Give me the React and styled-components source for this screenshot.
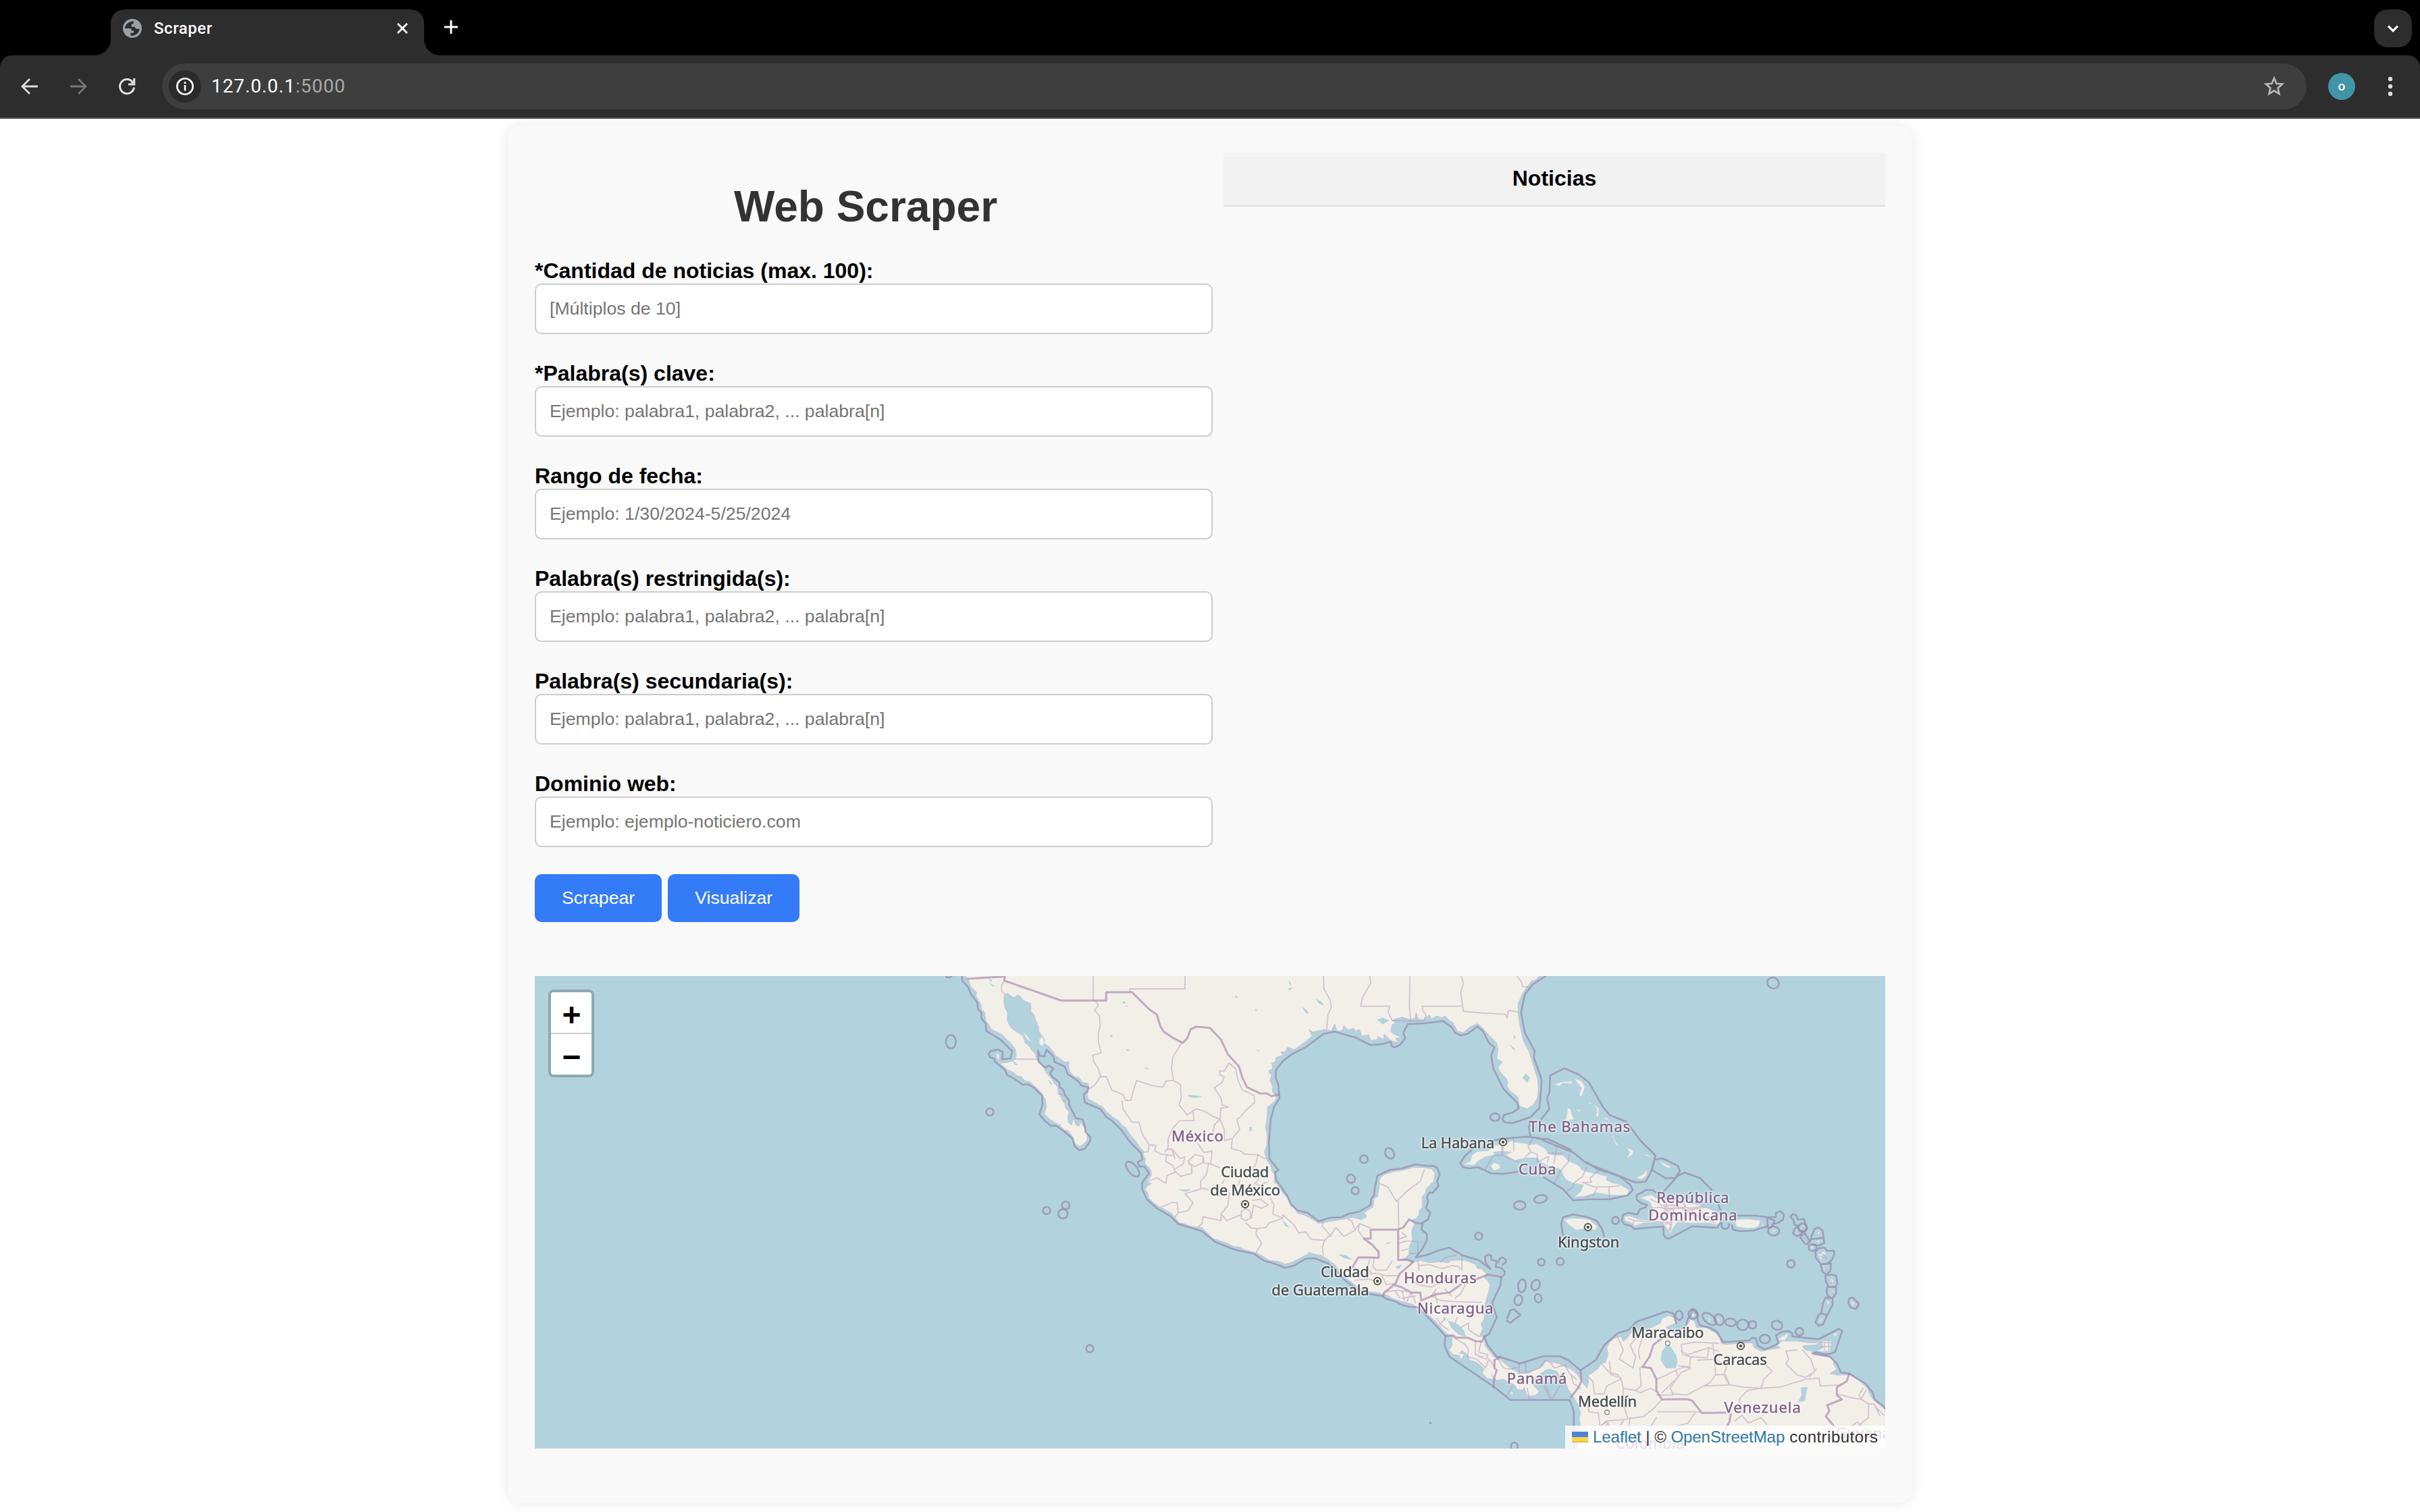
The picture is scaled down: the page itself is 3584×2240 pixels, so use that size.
import React from "react";
import styled, { createGlobalStyle } from "styled-components";

const GlobalStyle = createGlobalStyle`
  *, *::before, *::after { box-sizing: border-box; }
  html, body { margin: 0; background: #fff; }
  body { font-family: "Liberation Sans", Arial, sans-serif; overflow: hidden; }
`;

/* ---------- browser window ---------- */

const Window = styled.div`
  display: flex;
  flex-direction: column;
  width: 3584px;
  height: 2240px;
  overflow: hidden;
  background: #fff;
`;

const TabStrip = styled.div`
  display: flex;
  justify-content: space-between;
  height: 82px;
  padding: 14px 12px 0 164px;
  background: #000;
`;

const TabGroup = styled.div`
  display: flex;
  gap: 28px;
`;

const Tab = styled.div`
  position: relative;
  display: flex;
  align-items: center;
  width: 464px;
  height: 68px;
  padding: 0 22px 12px 18px;
  border-radius: 20px 20px 0 0;
  background: #2d2d2d;
  &::before,
  &::after {
    content: "";
    position: absolute;
    bottom: 0;
    width: 24px;
    height: 24px;
  }
  &::before {
    right: 100%;
    background: radial-gradient(circle at 0 0, transparent 23.5px, #2d2d2d 24.5px);
  }
  &::after {
    left: 100%;
    background: radial-gradient(circle at 100% 0, transparent 23.5px, #2d2d2d 24.5px);
  }
`;

const TabTitle = styled.span`
  flex: 1;
  padding-left: 18px;
  font: 500 24px/28px Roboto, sans-serif;
  letter-spacing: 0.55px;
  color: #fff;
`;

const NewTab = styled.div`
  display: flex;
  padding-top: 14px;
`;

const TabSearch = styled.div`
  display: flex;
  align-items: center;
  justify-content: center;
  width: 56px;
  height: 56px;
  border-radius: 20px;
  background: #2d2d2d;
`;

const ToolbarBack = styled.div`
  background: #000;
`;

const Toolbar = styled.div`
  display: flex;
  align-items: center;
  height: 94px;
  padding: 0 28px 0 28px;
  border-bottom: 2px solid #545253;
  border-radius: 18px 18px 0 0;
  background: #2d2d2d;
`;

const NavButtons = styled.div`
  display: flex;
  gap: 40px;
  width: 212px;
`;

const Omnibox = styled.div`
  display: flex;
  align-items: center;
  flex: 1;
  height: 68px;
  padding: 0 32px 0 10px;
  border-radius: 34px;
  background: #3e3e3e;
`;

const SiteInfo = styled.div`
  display: flex;
  width: 48px;
  height: 48px;
  border-radius: 50%;
  background: #2b2b2b;
`;

const Address = styled.div`
  flex: 1;
  padding-left: 15px;
  font: 400 28px/34px Roboto, sans-serif;
  letter-spacing: 0.9px;
  color: #fff;
`;

const Port = styled.span`
  color: #a9a9a9;
`;

const Avatar = styled.div`
  display: flex;
  align-items: center;
  justify-content: center;
  width: 40px;
  height: 40px;
  margin: 0 36px 0 32px;
  border-radius: 50%;
  background: #4295a6;
  font: 500 19px/40px Roboto, sans-serif;
  color: #fff;
`;

/* ---------- page ---------- */

const Page = styled.main`
  display: flex;
  justify-content: center;
  align-items: flex-start;
  flex: 1;
  padding-top: 10px;
  overflow: hidden;
`;

const Container = styled.div`
  display: flex;
  flex-direction: column;
  gap: 80px;
  width: 2080px;
  padding: 40px 40px 80px;
  border-radius: 20px;
  background: #f9f9f9;
  box-shadow: 0 0 20px rgba(0, 0, 0, 0.1);
`;

const Columns = styled.div`
  display: grid;
  grid-template-columns: 1fr 1fr;
  gap: 40px;
  align-items: start;
`;

const Title = styled.h1`
  margin: 44px 0 40px;
  font-size: 64px;
  line-height: 73px;
  text-align: center;
  color: #333;
`;

const Form = styled.form`
  display: flex;
  flex-direction: column;
  gap: 40px;
`;

const Field = styled.label`
  display: block;
  font-size: 32px;
  font-weight: bold;
  line-height: 37px;
  color: #000;
`;

const Input = styled.input`
  display: block;
  width: calc(100% + 24px);
  height: 75px;
  margin: 0;
  padding: 20px;
  border: 2px solid #ccc;
  border-radius: 10px;
  background: #fff;
  font: 26.667px "Liberation Sans", Arial, sans-serif;
  &::placeholder {
    color: #757575;
    opacity: 1;
  }
`;

const Actions = styled.div`
  display: flex;
  gap: 9px;
`;

const Button = styled.button`
  height: 71px;
  padding: 0 40px;
  border: 0;
  border-radius: 10px;
  background: #347bf8;
  font: 26.667px "Liberation Sans", Arial, sans-serif;
  color: #fff;
`;

const NewsTable = styled.table`
  width: 100%;
  border-collapse: collapse;
`;

const NewsHeading = styled.th`
  height: 79px;
  padding: 0 0 1px;
  border-bottom: 2px solid #ddd;
  background: #f2f2f2;
  font-size: 32px;
  line-height: 37px;
  color: #000;
`;

/* ---------- map ---------- */

const MapFrame = styled.section`
  position: relative;
  width: 2000px;
  height: 700px;
  overflow: hidden;
  background: #b2d2dd;
`;

const MapDrawing = styled.svg`
  display: block;
  width: 2000px;
  height: 700px;
`;

const Label = styled.text`
  font: 22px "Noto Sans", "Open Sans", sans-serif;
  stroke-width: 0.5px;
  filter: drop-shadow(0 0 1.5px #fff) drop-shadow(0 0 1.5px rgba(255, 255, 255, 0.9));
`;

const ZoomControl = styled.div`
  position: absolute;
  top: 20px;
  left: 20px;
  width: 68px;
  border: 4px solid rgba(0, 0, 0, 0.2);
  border-radius: 8px;
  background-clip: padding-box;
`;

const ZoomButton = styled.div`
  height: ${(p) => (p.$first ? 62 : 60)}px;
  padding-top: 4px;
  border-bottom: ${(p) => (p.$first ? "2px solid #ccc" : "0")};
  border-radius: ${(p) => (p.$first ? "4px 4px 0 0" : "0 0 4px 4px")};
  background: #fff;
  font: bold 48px/56px "Liberation Sans", Arial, sans-serif;
  text-align: center;
  color: #000;
  text-indent: 1px;
  & > span {
    display: block;
    padding-top: 2px;
    line-height: 56px;
  }
`;

const Attribution = styled.div`
  position: absolute;
  right: 0;
  bottom: 0;
  display: flex;
  align-items: center;
  width: 474px;
  height: 34px;
  padding: 0 10px;
  background: rgba(255, 255, 255, 0.8);
  font-size: 24px;
  line-height: 34px;
  letter-spacing: -0.05px;
  white-space: pre;
  color: #333;
`;

const Credit = styled.span`
  letter-spacing: 0.48px;
`;

const Link = styled.a`
  color: #2f78a8;
`;

const Flag = styled.span`
  width: 24px;
  height: 16px;
  margin-right: 7px;
  background: linear-gradient(#5080dc 50%, #f8d648 50% 88%, #ddc040 88%);
`;

// Map sheets: [x offset, y offset, x units per pixel, y units per pixel]
const sheets = {
  a: [608, -6, 3, 3],
  b: [1008, -6, 3, 3],
  c: [1408, -6, 2.613, 3],
  d: [1008, 334, 3, 3],
  e: [1408, 334, 2.45, 3],
  f: [1608, 294, 3, 3],
};

const place = (sheet, x, y) => {
  const [ox, oy, sx, sy] = sheets[sheet];
  return [+(ox + x / sx).toFixed(1), +(oy + y / sy).toFixed(1)];
};

// Lines are separated by ";", a lone letter switches to another sheet.
const trace = (source, close = false) => {
  let sheet = "a";
  return source
    .split(";")
    .map((line) => {
      const pts = [];
      line.trim().split(/\s+/).forEach((t) => {
        if (sheets[t]) sheet = t;
        else if (t) pts.push(place(sheet, ...t.split(",").map(Number)).join(" "));
      });
      return "M" + pts.join("L") + (close ? "Z" : "");
    })
    .join("");
};

const mainland = `a 85,0 90,18 105,38 112,62 128,80 140,90 136,104 148,128 158,140 160,165 176,180 180,215 196,240 204,254
 225,264 255,280 272,300 288,312 312,345 315,375 305,392 275,402 240,405 262,420 275,434 300,445 322,462 340,466 352,482 375,488 400,510
 430,540 445,570 450,600 440,630 455,645 462,658 485,668 510,680 528,702 545,706 565,730 575,760 595,775 615,765 630,745 630,715 615,690
 600,665 595,685 580,680 570,650 560,682 545,665 545,640 550,620 535,605 530,585 515,560 500,530 500,512 480,490 465,465 450,452 440,430 425,410
 405,390 400,365 385,350 375,332 355,315 345,285 325,270 310,262 290,245 275,215 276,180 265,160 260,130 262,100 275,95 290,104 300,112 310,112
 325,102 335,110 345,125 365,135 380,140 380,175 395,190 400,210 415,245 415,262 428,280 440,300 440,318 460,330 480,355 490,372 510,385 530,400
 550,400 548,425 555,445 575,465 595,470 610,490 635,495 640,520 630,545 635,565 665,580 680,590 700,600 720,625 745,645 770,660 785,682 800,690
 820,720 850,755 860,775 880,795 880,815 890,830 885,850 905,870 915,885 915,905 895,930 915,940 895,955 888,965 900,985 905,1005 920,1020 945,1040
 985,1062 1005,1072 1020,1090 1040,1115 1060,1118 1090,1130 1140,1136 1160,1155 1190,1185
 d 20,175 50,184 80,200 105,202 130,215 180,228 215,245 240,262 280,266 310,278 340,270 370,255 400,238 430,232 470,240 500,258 530,280 560,320
 600,355 640,385 680,400 720,405 760,415 790,432 830,445 870,455 900,470 930,495 960,515 990,545 1010,570 1035,592 1055,600 1050,620 1052,640
 1038,660 1055,680 1085,685 1088,703 1100,690 1105,678 1085,675 1095,662 1120,680 1130,705 1160,715 1185,735 1195,745 1185,760 1205,785 1240,792
 1225,770 1250,795 1280,790 1300,800 1330,815 1340,835 1365,838 1372,825 1385,865
 e 150,865 180,862 195,845 175,818 165,800 190,775 205,760 230,745 260,755 275,790 290,800 300,835 315,860 335,900 345,940 340,965 345,1000
 335,1030 330,1110 1460,1110 1450,925 1430,905 1410,885 1395,860 1385,830 1360,800 1340,785 1320,770 1280,772 1250,765 1275,745 1262,720 1265,705
 1245,690 1215,685 1190,680 1185,665 1160,660 1150,642 1200,636 1210,628 1170,628 1130,620 1075,620 1058,638 1070,652 1040,656 1000,665 975,650
 968,628 930,630 870,635 855,630 850,605 835,585 800,560 765,560 760,535 745,522 735,545 715,562 700,590 690,600 680,580 655,560 690,540 688,515
 665,508 640,520 635,540 610,555 580,575 530,580 515,605 500,622 492,600 480,602 465,610 450,625 440,650 445,680 435,715 420,720 410,740 390,760
 370,775 375,800 368,830 350,800 335,770 310,745 290,735 265,720 240,712 220,708 205,735 180,745 155,765 120,760 95,745 70,720 55,705 30,690
 15,665 0,645
 d 1195,620 1190,600 1172,600 1188,565 1180,545 1195,520 1195,470 1205,430 1215,400 1220,370 1210,350 1195,340 1205,320 1180,300 1165,298 1155,280
 1145,275 1110,262 1085,260 1050,262 1035,272 1000,268 950,272 910,262 870,272 855,262 820,262 845,250 860,235 862,200 875,170 872,130 885,100
 870,85 890,75 905,60 905,40
 b 920,1045 918,1000 935,980 935,965 950,950 970,930 975,895 960,875 930,870 880,868 840,880 790,888 750,900 728,920 728,950 720,1000 705,1005
 700,1045 660,1070 672,1085 645,1100 610,1090 590,1096 560,1100 500,1110 460,1118 440,1105 400,1082 365,1072 350,1050 335,1040 320,1005 290,970
 275,945 262,935 262,900 250,885 245,860 225,830 218,800 228,770 230,720 222,690 228,660 232,600 262,575 272,560 252,530 255,510 242,480 250,460
 235,440 255,430 250,405 265,400 270,380 300,370 290,355 312,355 320,335 350,345 400,310 430,285 415,255 435,268 450,262 490,255 515,262 530,230
 540,262 565,260 570,238 590,258 612,250 625,262 640,255 650,285 680,278 690,305 720,300 720,285 745,300 750,275 780,305 815,315 800,295 825,290
 800,280 778,265 785,235 800,225 785,215 800,208 830,200 860,210 885,210 892,180 902,210 925,212 950,190 960,208 985,195 1005,205 1020,195 1040,215
 1055,225 1075,262 1100,270 1130,245 1150,235 1165,230 1185,245 1205,270 1225,290 1250,315 1255,345 1250,385 1275,400 1255,425 1270,450 1290,470
 1300,490 1295,505 1310,530 1345,555 1350,595 1385,608 1412,590 1430,560 1435,520 1432,480 1420,440 1405,390 1392,350 1370,310 1360,270 1350,220
 1345,180 1345,140 1365,95 1385,65 1405,40 1425,35 1450,0`;

const islands = `b 1135,840 1140,815 1165,798 1215,795 1230,775 1280,765 1320,750 c 110,757 150,762 175,768 200,765 230,785 245,810 270,815 300,815
 320,840 360,860 372,880 400,890 440,900 470,910 465,925 490,938 520,945 555,970 545,992 480,990 430,980 385,995 345,1000 370,975 380,945 340,938
 310,920 290,875 250,865 215,845 200,825 150,825 110,838 80,812 105,800 60,795 30,800 b 1240,812 1200,820 1165,840 1150,858 1105,855;
 b 1225,865 1235,848 1262,855 1265,872 1240,882; a 418,300 430,288 440,312 430,330 418,318; a 345,268 365,285 380,310 365,300;
 a 228,360 240,370 238,388 230,382;
 f 88,104 115,96 140,92 165,110 220,115 300,125 360,140 420,165 448,190 445,215 425,222 395,215 320,215 250,212 232,240 222,262 208,240 190,215 150,212
 100,215 62,228 45,212 20,205 18,188 40,185 80,200 130,205 148,160 132,122 108,110;
 f 510,202 560,198 620,205 615,225 600,236 560,238 515,230; c 305,1100 345,1095 400,1100 432,1130 425,1147 390,1140 350,1145 320,1120;
 c 310,660 315,640 318,605 328,610 340,655; c 270,498 300,488 335,486 332,496 300,492 285,507; c 345,475 370,485 384,510 372,552 364,548 372,515;
 c 355,612 370,614 362,620; c 400,578 412,584 405,586; c 420,590 438,605 436,645 430,640 432,608; c 455,645 470,650 480,660 465,655;
 c 490,720 498,745 516,775 505,765 492,735; c 545,780 572,795 568,812 548,826 560,800; c 615,810 640,818 625,818; c 583,915 610,900 625,880 622,905 605,920;
 c 675,842 715,865 712,872 690,860; e 1220,620 1255,620 1250,665 1205,665 1225,650; f 945,712 968,700 955,716; f 698,735 740,708 745,715 730,735;
 f 880,355 905,342 912,352 895,360 895,378 885,372; f 926,452 945,470 942,488 932,475; f 904,405 914,412 910,428; f 934,512 942,520 936,532;
 f 918,560 928,566 920,578; f 884,648 896,640 888,656; f 1025,562 1040,575 1032,582; f 876,252 886,262 880,268; f 874,292 884,298 878,304; f 848,318 858,326 850,330;
 d 1310,845 1322,850 1318,860; f 628,222 640,226 630,230; f 672,248 690,250 680,254; f 312,612 330,626 322,632; f 388,635 400,648 394,650; f 430,638 440,650 434,654`;

const lakes = `e 655,643 668,640 690,680 697,710 690,740 655,740 637,705 640,670; d 1035,530 1075,545 1105,575 1112,600 1080,590 1050,562; d 1012,515 1025,520 1020,530;
 b 1365,470 1380,452 1398,470 1385,490; b 720,212 745,204 770,215 745,232; b 328,40 338,60 330,52; b 325,74 342,72 330,80; b 450,122 470,132 482,148 462,140;
 b 388,158 408,172 412,186 400,180; b 90,108 98,112 92,115; b 178,165 186,170 180,172; b 152,690 160,690 160,706 154,706; b 1325,285 1332,285 1330,298;
 b 1310,325 1332,345 1322,342; e 1145,828 1168,825 1158,885 1135,892 1148,860; d 800,290 828,282 815,300; d 300,85 328,115 310,108; d 548,235 580,240 605,258 570,250;
 d 415,225 440,235 410,238; d 760,185 778,180 765,188; a 1078,548 1100,548 1138,554 1110,558 1085,555; a 1040,968 1090,968 1070,976; a 195,32 208,36 202,42;
 a 200,52 218,62 210,62; a 788,132 802,134 794,140; a 800,150 812,154; a 735,280 744,286 738,290; a 804,342 816,348 810,350; a 885,425 904,428 895,430;
 a 1290,108 1298,112; a 460,480 475,498 468,498; a 300,395 322,412 308,412; a 440,640 478,662 460,655; e 215,750 235,745 255,755 245,765 220,765;
 b 630,1080 665,1075 672,1090 645,1102; b 1255,395 1272,405 1258,415; a 1385,348 1394,352`;

const waters = `a 72,0 76,40 100,65 115,100 142,135 145,165 160,180 160,205 180,230 182,262 220,285 250,305 280,335 297,350 290,385 252,388 255,355 235,345
 202,350 192,365 200,380 218,385 220,398 265,435 275,458 300,470 345,502 365,498 395,515 430,550 432,590 418,632 440,660 470,685 490,682 530,710 565,740
 575,775 595,792 620,785 645,750 645,735 622,710 622,690 610,655 580,650 568,625 550,590 550,570 530,545 525,525 508,510 505,490 475,465 465,450 480,430
 460,415 445,425 415,400 412,355;
 a 412,350 420,372 440,375 450,345 480,375 485,400 530,420 545,455 590,485 605,505 635,512 630,530 615,545 620,580 655,595 690,610 715,645 740,660 780,700
 820,755 870,805 875,835 855,845 862,865 885,865 905,895 875,935 875,965 895,1010 940,1050 1000,1085 1035,1120 1085,1135 1140,1152 1200,1200
 d 30,192 80,212 105,218 170,232 220,265 260,275 310,295 350,285 400,255 440,252 500,275 530,300 570,345 600,370 650,400 690,412 740,420 760,433 800,445
 830,460 860,468 900,470 960,530 1022,598 1018,640 1040,690 1240,825 1310,882 1480,882 e 305,882 320,930 322,1110;
 e 345,750 400,705 430,640 480,585 520,570 f 70,655 205,608 235,618 240,640 248,660;
 f 290,670 300,640 310,628 320,600 345,622 342,645 352,670 400,682 430,700 455,745 570,738 588,725 602,730 610,760 640,778 680,762 702,750 690,715 715,700
 745,695 762,705 765,720 880,732 970,686 985,695 960,770 e 1268,670 1240,680 1200,670 1185,675 1250,690 1275,720 1290,760 1320,765
 1380,810 1405,850 1412,880 1440,905 1455,925;
 e 345,750 300,705 270,688 210,688 125,720 65,695 d 1250,690 1210,640 1195,600 1215,590 1250,515 1235,470 1230,450 1265,375 1270,335 1285,325 1285,310 1270,295
 1245,290 1250,265 1225,258 1225,240 1212,236 1198,245 1200,270 1222,300 1170,260 1100,240 1040,205 990,218 940,238 890,248 920,210 940,170 940,145 915,125
 920,100 b 920,1115 945,1100 955,1070 935,1050 945,1020 940,1000 950,980 965,982 992,950 985,930 997,900 985,870 965,860 950,863 890,855 830,872 775,880 720,905
 708,960 706,990 692,1010 690,1035 640,1065 590,1075 560,1090 510,1092 458,1108 410,1070 365,1060 335,1030 320,995 270,925 265,890 280,880 240,830 238,760 245,660
 260,600 285,560 280,500 268,470 270,435 300,395 340,365 400,335 480,275 530,265 590,283 620,290 690,325 740,320 780,310 782,328 795,335 820,325 843,295 835,270
 855,232 930,228 1010,218 1050,245 1065,270 1090,282 1120,275 1165,242 1190,265 1215,315 1240,335 1225,370 1235,430 1280,520 1340,580 1348,605 1320,625 1282,635
 1275,655 1285,668 1320,672 1400,645 1440,605 1450,480 1415,380 1418,350 1375,270 1358,180 1375,100 1410,55 1480,10;
 c 215,655 247,610 238,560 248,535 250,460 305,428 360,455 400,490 455,600 480,635 545,665 600,750 658,815 640,890 620,932 580,935 530,912 390,850;
 c 175,660 168,690 174,732; b 1230,750 c 60,742 160,732 205,738 270,770 340,802 390,850 520,910 560,945 570,970 550,993 480,1010 400,1010 340,1015 300,965 225,912;
 b 1140,790 1110,815 1088,850 1100,868 1130,873 1165,867 1190,878 1225,895 1280,897 1345,887; c 200,740 240,742 330,790; c 390,845 440,880 470,890;
 c 658,833 685,828 745,862 752,885 735,915 697,917 645,880 658,815; c 690,975 745,905 770,892 830,915 875,968; f 435,135 444,158;
 f 444,212 430,237 320,230 215,285 200,282 192,268 190,232 105,238 62,242 45,228 18,222 5,205 12,178 35,170 75,178 85,155 112,145 118,135 92,128 72,112 72,90
 95,80 115,68 145,70 158,80; f 520,183 600,183 650,190 655,228 590,250 530,252 500,245 495,225;
 f 650,190 690,190 690,172 710,163 726,178 722,200 700,215 680,220 670,235 645,235; f 660,195 685,205 672,230; f 448,215 450,235 465,243 480,235 482,220;
 c 300,1170 293,1120 300,1090 340,1078 390,1088 430,1105 450,1140 460,1175;
 d 1258,270 1262,255 1275,248 1290,258 1290,272 1276,280; d 1296,520 1310,485 1325,478 1355,505 1335,520 1310,540 1295,530;
 f 755,188 765,176 780,180 788,200 815,198 820,215 828,238 815,256 798,250 785,228 772,222 770,205 755,188; f 790,228 775,240 766,262 785,275 805,262 808,248;
 f 805,270 798,280 820,308 832,310 838,292 820,262 806,270; f 842,300 850,270 862,242 880,235 898,250 905,305 880,316 850,312; f 846,288 895,282;
 f 866,345 880,328 905,325 920,340 948,338 950,355 938,380 915,398 890,398 868,370 866,345; f 888,398 935,395 932,430 915,445 897,432 888,398;
 f 910,450 935,445 958,450 964,485 955,498 925,500 912,475 910,450; f 918,500 958,500 958,530 940,550 920,540 916,518 918,500;
 f 910,548 942,550 942,580 918,625 900,665 882,673 866,658 878,628 892,615 900,570 910,548; f 890,615 915,625; f 1015,552 1030,546 1060,575 1045,598 1022,590 1012,572 1015,552`;

const countries = `a 100,30 265,20 262,38 515,127 715,127 715,90 830,90 865,125 905,165 940,190 955,240 970,265 1010,292 1055,315 1075,295 1090,255 1115,243 1175,248
 1225,300 1255,365 1305,420 1320,470 1340,512 1400,540 1430,540 1450,552 1480,545;
 d 812,260 812,125 690,125 690,165 660,165 700,195 725,225 725,250 635,248 610,290; d 812,125 835,115 860,80 890,95 915,98; d 812,260 850,258 880,268 820,320
 800,365 750,405 745,420; d 790,370 830,382 870,405 910,405 915,440; d 915,440 980,412 1040,405 1090,370; d 1160,345 1185,335 1210,325 1270,335;
 d 1022,598 1055,595 1070,605 1120,605 1160,622 1185,622 1195,600; d 1265,690 1240,705 1240,740 1250,750 1240,780 1235,825;
 e 660,590 610,635 595,690 570,735 600,740 620,790 620,840 640,880 730,878 750,885 785,940 870,938; e 890,945 885,980 870,1010;
 e 1320,765 1310,800 1275,825 1275,860 1293,880 1240,905 1248,930 1235,955 1265,1000; e 345,750 348,800 335,830 310,870`;

const states = `a 262,38 250,60 250,85 262,95; a 657,18 657,127; a 820,88 820,75 1065,75 1065,10; a 310,387 400,388;
 a 668,130 680,150 662,170 685,195 688,240 680,270 680,310 692,360 655,370 660,400 680,430 690,465 665,500 640,520;
 a 690,465 715,465 740,525 790,545 800,570 825,570 835,530 850,482 920,505 965,512 980,485 1015,482 1045,500 1048,560 1038,590 1075,635 1115,608 1150,618 1185,640 1222,655;
 a 1050,315 1010,380 1005,430 1015,482; a 1260,405 1240,440 1218,440 1220,458 1238,465 1232,488 1195,515 1225,560 1230,590 1258,600 1225,605 1220,650;
 a 1260,405 1290,430 1300,480 1320,525 1345,535 1372,550 1375,580 1335,615 1310,645 1295,655 1308,700 1275,740 1240,750; a 1220,655 1240,700 1240,750;
 a 1275,745 1270,785 1310,795 1330,810 1390,812 1420,830; a 1100,615 1105,660 1040,662 1010,695 990,740 990,780 975,800; a 1220,655 1195,680 1190,710;
 a 785,575 790,610 830,668 860,668 875,720 905,768 900,800 885,800; a 905,768 935,770 930,795 960,810 1005,815;
 a 985,790 1005,785 1020,830 1010,790 1045,830 1065,820 1055,855 1020,875 1020,890 985,905 980,940 940,915 900,930; a 985,810 978,840 1010,860 1020,885;
 a 1020,885 1045,908 1095,895 1095,865 1080,840 1110,812 1145,820 1145,845 1110,865 1080,850; a 1145,820 1150,850 1180,850 1185,795 1150,803 1120,760;
 a 1170,850 1220,870; a 1170,850 1160,900 1135,930 1135,965 1065,985 1100,1025 1080,1060 1035,1070 1020,1090; a 1135,960 1170,968; a 960,1045 1005,1025 1030,1025 1035,1070;
 a 1390,812 1380,850 1370,870; a 1262,980 1255,1040 1225,1075 1225,1105 1145,1088 1140,1120 1125,1130; a 1225,1075 1250,1105 1310,1080;
 a 1315,1065 1335,1050 1355,1065 1355,1095 1335,1105 1315,1095 1315,1065; a 1365,1015 1400,1010 1435,1035 1405,1050 1370,1035 1360,1095;
 a 1240,925 1230,940; a 1310,925 1300,950; a 1395,920 1375,940 1400,950; a 1430,935 1410,940;
 b 480,10 482,75 510,125 515,155 500,190 495,250; b 685,10 690,50 655,110 645,152 775,152 768,180 785,215 860,218 930,216; b 865,10 862,150 868,215;
 b 1090,10 1102,50 1090,90 1102,175 1200,183 1290,188 1295,205 1303,170 1345,178; b 1095,152 920,152 920,170 935,190 928,212; b 1340,18 1360,45 1365,65 1390,68;
 b 730,940 765,955 805,1020 850,975 910,930 928,880; b 812,1020 815,1145; b 245,1005 260,1035 255,1075 d 300,75; d 135,95 160,118 185,120 180,145 205,185 180,230;
 d 185,120 225,115 240,95 300,75 300,60 350,105 370,140 400,135 425,168 485,172 510,150 475,110 478,92; d 485,172 475,205 480,238;
 d 510,155 535,115 570,155 620,128 605,85 590,80; d 620,128 640,98 690,118; d 640,98 635,130 660,165;
 d 820,185 845,175 900,178 900,230 865,232; d 830,140 850,155 820,165; d 825,220 855,210; d 900,265 905,305; d 905,285 950,280 985,292 1010,298 1050,285 1080,290 1095,305 1095,240;
 d 1000,270 1020,250 1070,238; d 685,260 675,295 695,320; d 705,250 700,290 715,305 760,305 785,265; d 610,290 660,320 720,320 760,330 810,330;
 d 620,350 680,345 720,355; d 740,330 760,370 800,365; d 760,400 810,395 850,400; d 800,400 820,430; d 830,400 840,440; d 850,445 870,405; d 870,405 890,450; d 830,430 890,420;
 d 850,330 900,370 960,380; d 960,380 1000,360 1040,340; d 980,390 960,420 1000,440 1060,445; d 1110,370 1090,410 1065,430; d 1020,390 1050,420; d 975,405 985,450;
 d 1065,445 1180,448; d 985,520 1000,545 1015,525; d 1000,545 1020,560 1035,570; d 1090,560 1125,540 1125,570 1170,600; d 1075,515 1065,540; d 1060,605 1110,635 1125,660 1120,690;
 d 1155,625 1155,680 1185,690; d 1180,625 1170,670 1210,680 1205,700 1170,690; d 1120,690 1160,700 1200,740; d 1200,740 1215,700 1240,735; d 1255,700 1280,740 1310,745 1345,735;
 d 1350,720 1350,765; d 1378,715 1378,760; d 1345,765 1400,755 1440,740 1465,705 1500,720; d 1385,830 1395,880; d 1320,820 1290,870; d 1460,820 1485,875;
 e 215,810 240,880 275,810; e 290,730 305,765 330,790; e 310,770 320,810 345,830; e 230,710 250,740 290,725;
 e 420,720 450,760 480,770 490,790 440,820 430,855 395,855 390,800 370,775; e 450,710 455,770 480,780; e 480,605 500,660 485,700 535,740 545,690 525,640 550,600 540,585;
 e 490,780 500,830 545,840 565,820 560,740 570,735; e 575,585 555,660 560,700; e 545,840 560,850 600,830 620,845; e 500,830 500,900 515,960; e 640,880 610,920 575,955 550,960 495,970 440,975 415,1000;
 e 370,890 375,935 410,940 415,1000; e 625,935 780,935; e 620,960 600,1000 620,1030; e 760,940 735,985 690,1000; e 415,1000 440,980 470,1030 500,975; e 525,960 520,1000; e 445,985 425,1010;
 e 620,790 650,775 690,750 720,735 745,740; e 690,750 700,780 640,850; e 710,635 760,625 845,630; e 710,635 715,680 745,690 740,735 700,730; e 710,665 735,680 810,650 845,665;
 e 810,650 805,695 745,690; e 825,630 835,770 865,770 885,815; e 835,770 815,805 730,860 680,855 670,830 710,760 740,745; e 835,700 770,705; e 620,860 680,860; e 790,820 885,815 935,825 1000,830 1070,825 1160,790 1210,785;
 e 865,770 875,735 835,700; e 870,770 885,810; e 1000,830 1010,790 1040,755 1020,730; e 1000,830 950,840 920,880 935,940; e 1090,665 1100,700 1090,720 1130,770 1160,782 1195,755 1180,700 1150,660;
 e 1090,665 1130,660; e 1210,785 1215,820 1290,815; e 1175,780 1200,745; e 905,975 930,950 955,985 1000,960 1020,990; e 1365,875 1380,840; e 1275,855 1320,870 1365,880 1390,900 1390,960 1350,1000;
 e 1390,900 1410,900 1430,950; e 1365,880 1355,860 1370,830; e 1410,905 1445,950; e 1300,1020 1350,980 1400,1030;
 b 1280,765 1275,815 1235,815 1200,875; b 1275,815 1345,845; c 62,765 65,815; c 108,735 110,795; c 182,740 165,775 175,800 155,820; c 175,800 200,810 200,845 245,820 240,845;
 c 240,805 300,805; c 275,780 265,850; c 325,810 320,845 300,870 265,940; c 390,870 375,910 340,940 340,955 315,975; c 435,885 405,915 410,935 375,935; c 375,935 420,955 475,955 520,950;
 c 430,960 420,990 385,1000; c 478,955 480,1005; c 640,1010 690,1040 730,1035 780,1060 850,1045; c 660,1000 700,1020 700,1060 730,1090; c 690,1050 760,1050 800,1080 870,1090;
 c 660,1070 700,1120 730,1100 770,1110; c 730,1040 720,1100 715,1150; c 800,1060 820,1110; c 840,1070 850,1110;
 f 135,150 180,145 210,160 260,145 310,150 370,142; f 195,135 205,155 195,165; f 270,120 290,140 275,150; f 35,195 60,205 55,220; f 60,205 110,208 190,212; f 205,212 225,225 215,245; f 228,215 222,250;
 f 395,205 420,215; f 905,745 905,780; f 925,740 925,780; f 890,745 940,748; f 895,765 935,765; f 885,350 905,358 915,375; f 885,362 900,370; f 930,455 940,485; f 908,408 914,428; f 932,515 942,530; f 815,280 825,292;
 a 500,540 520,545; a 520,570 530,575`;

// [sheet, x, y, rx, ry, rotation]
const rings = [
  ["a", 15, 0, 20, 24, 0], ["a", 25, 310, 22, 30, 0], ["a", 198, 622, 16, 16, 0], ["a", 450, 1060, 16, 16, 0],
  ["a", 535, 1037, 17, 17, 0], ["a", 523, 1075, 21, 21, 0], ["a", 832, 876, 40, 20, 50],
  ["b", 1242, 645, 21, 17, 0], ["b", 774, 806, 19, 25, -30], ["b", 660, 832, 17, 17, 0], ["b", 602, 919, 18, 19, -30],
  ["b", 621, 972, 16, 16, 0], ["b", 1352, 1037, 26, 19, 0], ["b", 1445, 1009, 29, 17, -12], ["b", 1170, 1174, 16, 16, 0],
  ["d", 1362, 375, 17, 29, 6], ["d", 1423, 371, 18, 24, 25], ["d", 1346, 438, 18, 23, 10], ["d", 1434, 430, 15, 19, -15],
  ["d", 1448, 269, 15, 15, 0], ["d", 1532, 267, 16, 16, 0], ["d", 1328, 1088, 15, 17, 0], ["d", -558, 654, 16, 16, 0],
  ["c", 1113, 49, 23, 24, 30], ["c", 503, 1104, 13, 16, 0],
  ["f", 680, 251, 25, 20, 0], ["f", 757, 397, 17, 17, 0], ["f", 853, 325, 17, 15, 0], ["f", 809, 237, 19, 19, 0],
  ["f", 260, 626, 16, 20, 0], ["f", 322, 620, 20, 22, 0], ["f", 395, 642, 20, 36, -52], ["f", 438, 645, 20, 25, -25],
  ["f", 489, 657, 24, 17, 10], ["f", 543, 668, 25, 24, 0], ["f", 586, 668, 17, 17, 0], ["f", 695, 670, 24, 20, 20],
  ["f", 641, 731, 23, 19, 0], ["f", 795, 699, 17, 17, 0],
];

// [sheet, left, right, baseline, text]
const countryLabels = [
  ["a", 1005, 1235, 752, "México"], ["c", 168, 560, 710, "The Bahamas"], ["c", 128, 273, 900, "Cuba"],
  ["f", 160, 482, 126, "República"], ["f", 123, 518, 205, "Dominicana"], ["d", 837, 1160, 362, "Honduras"],
  ["d", 897, 1235, 499, "Nicaragua"], ["e", 78, 295, 809, "Panamá"], ["e", 866, 1144, 940, "Venezuela"],
  ["e", 472, 722, 1098, "Colombia"], ["e", 1270, 1470, 1052, "Guyana"],
];
const cityLabels = [
  ["a", 1225, 1438, 913, "Ciudad"], ["a", 1177, 1488, 993, "de México"], ["b", 914, 1240, 784, "La Habana"],
  ["d", 468, 683, 337, "Ciudad"], ["d", 250, 683, 417, "de Guatemala"], ["e", 262, 486, 203, "Kingston"],
  ["e", 530, 792, 606, "Maracaibo"], ["e", 827, 1021, 727, "Caracas"], ["e", 336, 549, 911, "Medellín"],
];
const capitals = [["a", 1332, 1032], ["b", 1278, 756], ["d", 720, 354], ["e", 372, 114], ["e", 926, 642]];
const towns = [["e", 661, 630], ["e", 441, 937]];

const MapLabel = ({ entry, color }) => {
  const [sheet, left, right, baseline, text] = entry;
  const [x, y] = place(sheet, left, baseline);
  const [end] = place(sheet, right, baseline);
  return (
    <Label x={x} y={y} textLength={end - x} fill={color} stroke={color}>
      {text}
    </Label>
  );
};

const CaribbeanMap = () => (
  <MapDrawing viewBox="0 0 2000 700" fill="none" strokeLinejoin="round" strokeLinecap="round">
    <path d={trace(mainland, true)} fill="#f2efe9" stroke="#cdbfd0" strokeWidth="0.9" />
    <path d={trace(islands, true)} fill="#f2efe9" stroke="#dcd9dc" strokeWidth="0.6" />
    <path d={trace(lakes, true)} fill="#b2d2dd" stroke="#b2d2dd" strokeWidth="0.7" />
    <path d={trace(states)} stroke="#b499b8" strokeOpacity="0.5" strokeWidth="1.8" />
    <path d={trace(countries)} stroke="#a88bac" strokeOpacity="0.68" strokeWidth="3.1" />
    <g stroke="#9689ad" strokeOpacity="0.7" strokeWidth="2.6">
      <path d={trace(waters)} />
      {rings.map(([sheet, cx, cy, rx, ry, turn]) => {
        const [x, y] = place(sheet, cx, cy);
        const [, , sx, sy] = sheets[sheet];
        return (
          <ellipse key={`${x}-${y}`} cx={x} cy={y} rx={rx / sx} ry={ry / sy} transform={`rotate(${turn} ${x} ${y})`} />
        );
      })}
    </g>
    <circle cx="1326.5" cy="662" r="1.8" fill="#a79fba" />
    {capitals.map(([sheet, cx, cy]) => {
      const [x, y] = place(sheet, cx, cy);
      return (
        <g key={`${x}`}>
          <circle cx={x} cy={y} r="5.2" fill="#f2efe9" stroke="#59594f" strokeWidth="1.9" />
          <circle cx={x} cy={y} r="2.1" fill="#3f3f38" />
        </g>
      );
    })}
    {towns.map(([sheet, cx, cy]) => {
      const [x, y] = place(sheet, cx, cy);
      return <circle key={`${x}`} cx={x} cy={y} r="3.3" fill="#fff" stroke="#8d8d85" strokeWidth="1.4" />;
    })}
    {countryLabels.map((l) => <MapLabel key={l[4]} entry={l} color="#816387" />)}
    {cityLabels.map((l) => <MapLabel key={l[4] + l[1]} entry={l} color="#4b4f50" />)}
  </MapDrawing>
);

/* ---------- icons ---------- */

const GlobeIcon = () => (
  <svg width="28" height="28" viewBox="0 0 28 28">
    <circle cx="14" cy="14" r="14" fill="#9aa0a6" />
    <path
      d="M16 3.5C9 3.5 3.5 8 3 14h6.5c2.3 0 3.5 1.3 3.5 3.5h3v3.2h-4.5v4c6.8.6 12.8-3.5 13.2-10h-3.5c-2 0-3.3-1-3.3-3h-5.2V7.6h3V4.5c0-.4.1-.8.3-1z"
      fill="#2d2d2d"
    />
  </svg>
);

const CloseIcon = () => (
  <svg width="20" height="20" viewBox="0 0 20 20" stroke="#fff" strokeWidth="2.8">
    <path d="M3 3l14 14M17 3L3 17" />
  </svg>
);

const PlusIcon = () => (
  <svg width="24" height="24" viewBox="0 0 24 24" stroke="#fff" strokeWidth="3">
    <path d="M12 2v20M2 12h20" />
  </svg>
);

const ChevronIcon = () => (
  <svg width="24" height="24" viewBox="0 0 24 24" fill="none" stroke="#fff" strokeWidth="3.2">
    <path d="M5 8.7l7 7 7-7" />
  </svg>
);

const ArrowIcon = ({ color, flip }) => (
  <svg width="32" height="32" viewBox="0 0 32 32" fill="none" stroke={color} strokeWidth="2.8">
    <path d={flip ? "M4 16h22M16 5l11 11-11 11" : "M28 16H6M16 5L5 16l11 11"} />
  </svg>
);

const ReloadIcon = () => (
  <svg width="32" height="32" viewBox="0 0 32 32" fill="none" stroke="#dedede" strokeWidth="3">
    <path d="M26.5 17.5A10.5 10.5 0 1 1 24.5 9.8" />
    <path d="M26.8 4v9H18" />
    <path d="M21 11.5l5-5v5z" fill="#dedede" stroke="none" />
  </svg>
);

const InfoIcon = () => (
  <svg width="48" height="48" viewBox="0 0 48 48" fill="none">
    <circle cx="24" cy="24" r="11.7" stroke="#fff" strokeWidth="2.6" />
    <path d="M24 22v8.5" stroke="#fff" strokeWidth="2.6" />
    <circle cx="24" cy="18.6" r="1.6" fill="#fff" />
  </svg>
);

const StarIcon = () => (
  <svg width="32" height="32" viewBox="0 0 32 32" fill="none" stroke="#b8b8b8" strokeWidth="2.6">
    <path d="M16 3.7l3.4 8.1 8.8.8-6.7 5.8 2 8.6L16 22.4 8.500 27l2-8.600-6.700-5.800 8.800-.8z" />
  </svg>
);

const MoreIcon = () => (
  <svg width="8" height="32" viewBox="0 0 8 32" fill="#dedede">
    <circle cx="4" cy="5" r="3.2" />
    <circle cx="4" cy="16" r="3.2" />
    <circle cx="4" cy="27" r="3.2" />
  </svg>
);

const MenuSlot = styled.div`
  display: flex;
  width: 24px;
  margin: 0 4px;
  justify-content: center;
`;

const fields = [
  ["*Cantidad de noticias (max. 100):", "[Múltiplos de 10]"],
  ["*Palabra(s) clave:", "Ejemplo: palabra1, palabra2, ... palabra[n]"],
  ["Rango de fecha:", "Ejemplo: 1/30/2024-5/25/2024"],
  ["Palabra(s) restringida(s):", "Ejemplo: palabra1, palabra2, ... palabra[n]"],
  ["Palabra(s) secundaria(s):", "Ejemplo: palabra1, palabra2, ... palabra[n]"],
  ["Dominio web:", "Ejemplo: ejemplo-noticiero.com"],
];

export default function App() {
  return (
    <Window>
      <GlobalStyle />
      <TabStrip>
        <TabGroup>
          <Tab>
            <GlobeIcon />
            <TabTitle>Scraper</TabTitle>
            <CloseIcon />
          </Tab>
          <NewTab>
            <PlusIcon />
          </NewTab>
        </TabGroup>
        <TabSearch>
          <ChevronIcon />
        </TabSearch>
      </TabStrip>
      <ToolbarBack>
        <Toolbar>
          <NavButtons>
            <ArrowIcon color="#dedede" />
            <ArrowIcon color="#767676" flip />
            <ReloadIcon />
          </NavButtons>
          <Omnibox>
            <SiteInfo>
              <InfoIcon />
            </SiteInfo>
            <Address>
              127.0.0.1<Port>:5000</Port>
            </Address>
            <StarIcon />
          </Omnibox>
          <Avatar>o</Avatar>
          <MenuSlot>
            <MoreIcon />
          </MenuSlot>
        </Toolbar>
      </ToolbarBack>
      <Page>
        <Container>
          <Columns>
            <div>
              <Title>Web Scraper</Title>
              <Form>
                {fields.map(([label, hint]) => (
                  <Field key={label}>
                    {label}
                    <Input placeholder={hint} />
                  </Field>
                ))}
                <Actions>
                  <Button type="button">Scrapear</Button>
                  <Button type="button">Visualizar</Button>
                </Actions>
              </Form>
            </div>
            <NewsTable>
              <thead>
                <tr>
                  <NewsHeading>Noticias</NewsHeading>
                </tr>
              </thead>
            </NewsTable>
          </Columns>
          <MapFrame>
            <CaribbeanMap />
            <ZoomControl>
              <ZoomButton $first>
                <span>+</span>
              </ZoomButton>
              <ZoomButton>
                <span>−</span>
              </ZoomButton>
            </ZoomControl>
            <Attribution>
              <Flag />
              <Link>Leaflet</Link>
              <span> | © </span>
              <Link>OpenStreetMap</Link>
              <Credit> contributors</Credit>
            </Attribution>
          </MapFrame>
        </Container>
      </Page>
    </Window>
  );
}
